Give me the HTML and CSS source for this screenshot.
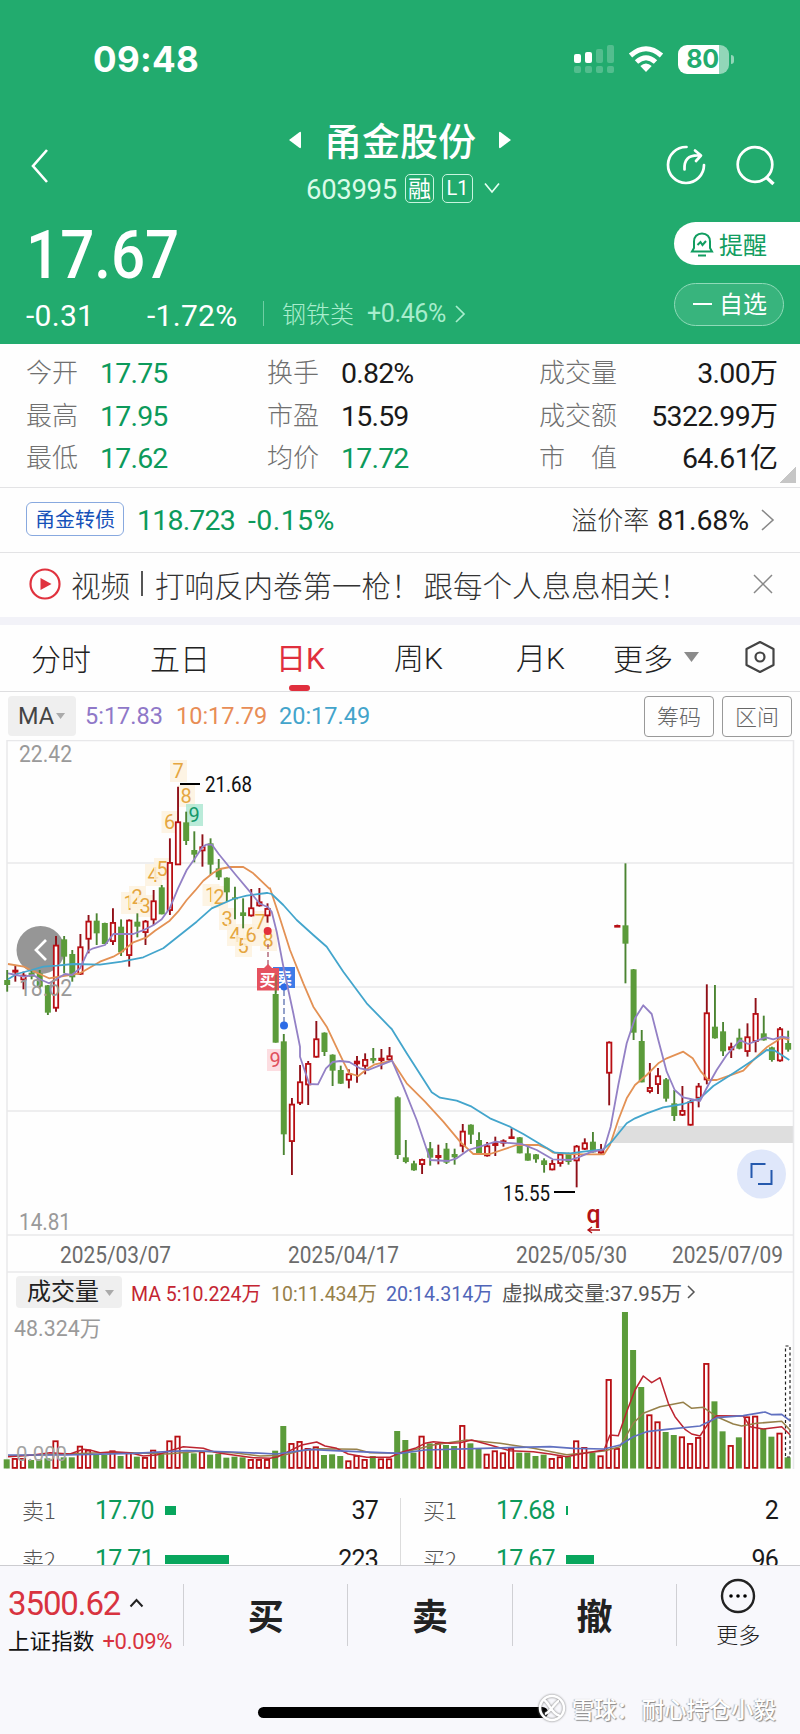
FILE: index.html
```html
<!DOCTYPE html>
<html lang="zh-CN">
<head>
<meta charset="utf-8">
<title>甬金股份 603995</title>
<link rel="stylesheet" href="styles.css">
</head>
<body>
<div class="app">
  <header class="header">
    <div class="status">
      <span class="clock">09:48</span>
      <svg class="signal" width="42" height="30" viewBox="0 0 42 30" fill="#fff">
        <rect x="1" y="10" width="7" height="9" rx="2"/><rect x="12" y="8" width="7" height="11" rx="2"/>
        <g opacity=".22"><rect x="23" y="5" width="7" height="14" rx="2"/><rect x="34" y="1" width="7" height="18" rx="2"/><rect x="1" y="22" width="7" height="7" rx="2"/><rect x="12" y="22" width="7" height="7" rx="2"/><rect x="23" y="22" width="7" height="7" rx="2"/><rect x="34" y="22" width="7" height="7" rx="2"/></g>
      </svg>
      <svg class="wifi" width="36" height="27" viewBox="0 0 36 27" fill="none" stroke="#fff" stroke-width="5"><path d="M2.500 9.500Q18-4 33.500 9.500"/><path d="M8.500 16Q18 7.500 27.500 16"/><path d="M12.300 20Q18 15 23.700 20L18 26Z" fill="#fff" stroke="none"/></svg>
      <div class="battery"><span>80</span></div><i class="battery-tip"></i>
    </div>
    <div class="titlebar">
      <svg class="back" width="20" height="36" viewBox="0 0 20 36"><path d="M17 2 3 18l14 16" fill="none" stroke="#fff" stroke-width="2.600"/></svg>
      <div class="stock">
        <div class="stock-name"><svg width="14" height="20"><path d="M13 3v14q0 2-2 .5L1 10 11 2.500q2-1.500 2 .5z" fill="#fff"/></svg><b>甬金股份</b><svg width="14" height="20"><path d="M1 3v14q0 2 2 .5L13 10 3 2.500Q1 1 1 3z" fill="#fff"/></svg></div>
        <div class="stock-code"><span>603995</span><i>融</i><i class="lv">L1</i><svg width="16" height="12" viewBox="0 0 16 12"><path d="M1 1.500 8 10l7-8.500" fill="none" stroke="#e3fff1" stroke-width="1.700"/></svg></div>
      </div>
      <div class="tools">
        <svg width="40" height="42" viewBox="0 0 40 42" fill="none" stroke="#fff" stroke-width="2.700" stroke-linecap="round"><path d="M20.500 3A18 18 0 1 0 38 21"/><path d="M18.500 25.500C18 16 22 11 33 11.500M29 6.500l6 5-5 5.500" stroke-linejoin="round"/></svg>
        <svg width="40" height="42" viewBox="0 0 40 42" fill="none" stroke="#fff" stroke-width="2.700"><circle cx="20" cy="20.500" r="17.300"/><path d="m31.500 33.500 7 6.500" stroke-width="3.500"/></svg>
      </div>
    </div>
    <div class="quote">
      <div class="price"><span>17.67</span></div>
      <div class="change"><span class="diff">-0.31</span><span class="pct">-1.72%</span><i></i><span class="sector">钢铁类</span><span class="sector-pct">+0.46%</span><svg width="12" height="20"><path d="m2 2 8 8-8 8" fill="none" stroke="#a8edcd" stroke-width="1.700"/></svg></div>
    </div>
    <div class="actions">
      <div class="remind"><svg width="24" height="26" viewBox="0 0 24 26" fill="none" stroke="#119d60" stroke-width="2"><path d="M12 2.500c-5 0-8 3.500-8 8V17l-2 3.500h20L20 17v-6.500c0-4.500-3-8-8-8zM8 24.500h8"/><path d="m7.500 14 3-3 2 3 3.500-4"/></svg>提醒</div>
      <div class="fav"><i></i>自选</div>
    </div>
  </header>

  <section class="stats">
    <span>今开</span><b class="g">17.75</b><span>换手</span><b>0.82%</b><span>成交量</span><b class="r">3.00<em>万</em></b>
    <span>最高</span><b class="g">17.95</b><span>市盈</span><b>15.59</b><span>成交额</span><b class="r">5322.99<em>万</em></b>
    <span>最低</span><b class="g">17.62</b><span>均价</span><b class="g">17.72</b><span>市　值</span><b class="r">64.61<em>亿</em></b>
    <i class="corner"></i>
  </section>

  <section class="bond">
    <span class="tag">甬金转债</span><b class="g">118.723</b><b class="g bp">-0.15%</b>
    <span class="prem">溢价率</span><b>81.68%</b><svg width="15" height="24"><path d="m2 2 11 10L2 22" fill="none" stroke="#888" stroke-width="1.600"/></svg>
  </section>

  <section class="news">
    <svg width="32" height="32" viewBox="0 0 32 32"><circle cx="16" cy="16" r="14.500" fill="none" stroke="#e0323e" stroke-width="2.200"/><path d="m11.500 10 11 6-11 6z" fill="#e0323e"/></svg>
    <span>视频</span><i></i><span>打响反内卷第一枪！</span><span class="n2">跟每个人息息相关！</span>
    <svg class="close" width="20" height="20"><path d="m1 1 18 18M19 1 1 19" stroke="#888" stroke-width="1.500"/></svg>
  </section>

  <nav class="tabs">
    <span>分时</span><span>五日</span><span class="on">日<em>K</em></span><span>周<em>K</em></span><span>月<em>K</em></span><span>更多</span><i></i>
    <svg width="32" height="34" viewBox="0 0 32 34" fill="none" stroke="#444" stroke-width="2.200"><path d="M16 2 29.500 9v16L16 32 2.500 25V9z" stroke-linejoin="round"/><circle cx="16" cy="17" r="4.500"/></svg>
  </nav>

  <section class="mabar">
    <div class="ma-btn">MA<i></i></div><span class="m5">5:17.83</span><span class="m10">10:17.79</span><span class="m20">20:17.49</span>
    <div class="btns"><span>筹码</span><span>区间</span></div>
  </section>

  <svg class="chart" id="chart" width="800" height="738" viewBox="0 740 800 738"></svg>

  <section class="book">
    <div class="side">
      <div class="row"><span>卖1</span><b class="g">17.70</b><i style="width:11px"></i><b class="q">37</b></div>
      <div class="row"><span>卖2</span><b class="g">17.71</b><i style="width:64px"></i><b class="q">223</b></div>
    </div>
    <div class="side">
      <div class="row"><span>买1</span><b class="g">17.68</b><i style="width:2px"></i><b class="q">2</b></div>
      <div class="row"><span>买2</span><b class="g">17.67</b><i style="width:28px"></i><b class="q">96</b></div>
    </div>
  </section>

  <footer class="footer">
    <div class="dock">
      <div class="index"><div class="iv">3500.62<svg width="15" height="10"><path d="m1.500 8.500 6-6.500 6 6.500" fill="none" stroke="#222" stroke-width="2"/></svg></div><div class="in">上证指数<span>+0.09%</span></div></div>
      <div class="act">买</div><div class="act">卖</div><div class="act">撤</div>
      <div class="more"><svg width="36" height="36" viewBox="0 0 36 36"><circle cx="18" cy="18" r="16" fill="none" stroke="#222" stroke-width="2.400"/><circle cx="11" cy="18" r="1.800"/><circle cx="18" cy="18" r="1.800"/><circle cx="25" cy="18" r="1.800"/></svg><span>更多</span></div>
    </div>
    <div class="home"></div>
    <div class="mark"><svg width="28" height="28" viewBox="0 0 28 28" fill="none" stroke="#fff" stroke-width="2.500"><circle cx="14" cy="14" r="12"/><path d="M6 6c5 2 7 14 16 16M21 7c-3 0-9 12-14 13" /></svg><span>雪球：</span><span>耐心持仓小毅</span></div>
  </footer>
</div>
<script src="chart.js"></script>
</body>
</html>
```

FILE: styles.css
```css
* { box-sizing: border-box; }
body { margin: 0; background: #fff; color: #1a1a1a; font-family: Roboto, "Noto Sans CJK SC", sans-serif; }
i, em { font-style: normal; }
b { font-weight: 400; }
svg { display: block; flex: none; }
.app { width: 800px; height: 1734px; overflow: hidden; background: #fefefe; }
.g { color: #0c9a5b; }

.header { position: relative; height: 344px; background: #22ab6e; color: #fff; }
.status { display: flex; align-items: center; height: 118px; padding: 0 0 0 93px; }
.clock { width: 480px; font: 700 35px/40px Inter, sans-serif; letter-spacing: .3px; }
.wifi { margin-left: 13px; }
.battery { margin-left: 14px; width: 51px; height: 29px; border-radius: 9px; background: linear-gradient(90deg, #fff 80%, #92d6b8 80%); color: #22ab6e; font: 700 25px/29px Inter, sans-serif; text-align: center; letter-spacing: -.3px; padding-right: 2px; }
.battery-tip { width: 3px; height: 9px; margin-left: 2px; border-radius: 0 4px 4px 0; background: #92d6b8; }
.titlebar { display: flex; height: 92px; padding-left: 30px; }
.back { margin-top: 30px; }
.stock { width: 440px; margin-left: 130px; }
.stock-name { display: flex; align-items: center; justify-content: center; gap: 22px; height: 44px; }
.stock-name b { margin-top: -3px; font: 500 38px/44px "Noto Sans CJK SC", sans-serif; }
.stock-code { display: flex; align-items: center; height: 52px; padding-left: 126px; color: #d9fbe9; font-size: 27.500px; letter-spacing: -.3px; }
.stock-code span { width: 99px; margin-top: 3px; }
.stock-code i { width: 29px; height: 29px; margin-right: 8px; border: 1.5px solid #c8f5df; border-radius: 5px; font: 23px/25px "Noto Sans CJK SC", sans-serif; text-align: center; letter-spacing: 0; color: #fff; }
.stock-code .lv { width: 31px; font: 20px/26px Roboto, sans-serif; margin-right: 11px; }
.tools { display: flex; gap: 29px; margin: 26px 0 0 46px; }
.quote { padding-left: 26px; }
.price { height: 88px; padding-top: 2px; font: 500 66px/88px Roboto, sans-serif; }
.price span { display: inline-block; transform: scaleX(.91); transform-origin: 0 50%; }
.change { display: flex; align-items: center; height: 34px; font-size: 30px; letter-spacing: .3px; }
.diff { width: 121px; }
.pct { width: 116px; }
.change i { width: 1px; height: 25px; margin-top: -4px; background: #6fcea3; }
.sector { margin: -4px 0 0 18px; width: 85px; font: 300 24px/30px "Noto Sans CJK SC", sans-serif; letter-spacing: 0; color: #a8edcd; }
.sector-pct { width: 87px; margin-top: -3px; font-size: 25px; letter-spacing: -.4px; color: #a8edcd; }
.change svg { margin-top: -3px; }
.actions { position: absolute; right: 0; top: 222px; width: 126px; display: flex; flex-direction: column; gap: 18px; font: 24px/42px "Noto Sans CJK SC", sans-serif; }
.remind { display: flex; align-items: center; height: 43px; padding-left: 16px; gap: 5px; border-radius: 22px 0 0 22px; background: #fff; color: #119d60; }
.fav { display: flex; align-items: center; width: 110px; height: 43px; padding: 0 0 3px 18px; gap: 7px; border: 1.5px solid #8fdab8; border-radius: 22px; background: #38b47d; }
.fav i { width: 19px; height: 2px; margin-top: 2px; background: #fff; }

.stats { position: relative; display: grid; height: 144px; padding: 8px 22px 0 26px; grid-template-columns: 74px 167px 74px 198px 91px 1fr; grid-auto-rows: 42.500px; line-height: 43px; font-size: 28.500px; border-bottom: 1.500px solid #e3e3e5; }
.stats span { font: 300 26px/38px "Noto Sans CJK SC", sans-serif; color: #707070; }
.stats b { letter-spacing: -.8px; }
.stats .r { text-align: right; letter-spacing: -.7px; }
.stats em { font: 28px/30px "Noto Sans CJK SC", sans-serif; letter-spacing: 0; }
.corner { position: absolute; right: 4px; bottom: 4px; width: 16px; height: 16px; background: linear-gradient(135deg, transparent 50%, #c6c6c6 50%); }

.bond { display: flex; align-items: center; height: 65px; padding: 0 25px 0 26px; font-size: 28.500px; letter-spacing: -.8px; border-bottom: 1.500px solid #e3e3e5; }
.tag { width: 98px; height: 34px; margin: -2px 13px 0 0; border: 1px solid #88a9df; border-radius: 6px; font: 20px/31px "Noto Sans CJK SC", sans-serif; text-align: center; letter-spacing: 0; color: #1450b8; }
.bp { margin-left: 13px; letter-spacing: .4px; }
.prem { margin: -2px 8px 0 auto; font: 300 26px/34px "Noto Sans CJK SC", sans-serif; letter-spacing: 0; color: #333; }
.prem + b { letter-spacing: -.1px; }
.bond svg { margin-left: 11px; }

.news { display: flex; align-items: center; height: 72px; padding: 0 27px 3px 29px; border-bottom: 8px solid #f2f2f8; font: 300 29.500px/40px "Noto Sans CJK SC", sans-serif; color: #333; }
.news svg:first-child { margin-right: 10px; }
.news i { width: 2px; height: 25px; margin: 0 12px 0 11px; background: #555; }
.n2 { margin-left: 3px; white-space: nowrap; }
.close { margin-left: auto; }

.tabs { display: grid; grid-template-columns: 119px 126px 118px 122px 97px 71px 60px auto; align-items: center; justify-content: start; height: 67px; padding: 0 0 2px 31px; border-bottom: 1.500px solid #dedee0; font: 30px/46px "Noto Sans CJK SC", sans-serif; color: #222; }
.tabs span { white-space: nowrap; font-weight: 300; }
.tabs em { font: 300 30px/46px Roboto, sans-serif; }
.tabs .on { position: relative; color: #e02f3d; font-weight: 400; }
.tabs .on em { font-weight: 400; }
.on::after { content: ""; position: absolute; left: 13px; top: 52px; width: 21px; height: 6px; border-radius: 4px; background: #e02f3d; }
.tabs i { width: 15px; height: 10px; background: #8b8b8b; clip-path: polygon(0 0, 100% 0, 50% 100%); }

.mabar { display: flex; align-items: center; height: 48px; padding: 0 8px; font-size: 23.500px; white-space: nowrap; }
.ma-btn { display: flex; align-items: center; width: 68px; height: 40px; padding-left: 10px; gap: 2px; border-radius: 4px; background: #efefef; color: #444; margin-right: 9px; }
.ma-btn i { width: 9px; height: 6px; background: #aaa; clip-path: polygon(0 0, 100% 0, 50% 100%); }
.m5 { width: 91px; color: #8f78c8; } .m10 { width: 103px; color: #e88d56; } .m20 { color: #43a4cb; }
.btns { display: flex; gap: 8px; margin-left: auto; font: 300 22px/36px "Noto Sans CJK SC", sans-serif; color: #666; }
.btns span { width: 70px; height: 41px; border: 1.500px solid #999; border-radius: 4px; text-align: center; }

.book { display: flex; height: 87px; overflow: hidden; padding-top: 20px; }
.side { width: 400px; padding: 0 22px; }
.side + .side { border-left: 1px solid #dcdcdc; }
.row { display: flex; align-items: center; height: 48.700px; font-size: 25px; letter-spacing: -.8px; }
.row:first-child { margin-top: -12px; }
.row span { width: 74px; margin-top: -2px; font: 300 22px/30px "Noto Sans CJK SC", sans-serif; letter-spacing: 0; color: #555; }
.row .g { width: 69px; margin-left: -1px; margin-right: 1px; }
.row i { height: 9px; background: #08a65d; }
.row .q { margin-left: auto; }

.footer { position: relative; height: 169px; border-top: 1.500px solid #ccccd0; background: #f8f8fc; }
.dock { display: flex; padding-top: 18px; height: 82px; }
.index { width: 183px; padding-left: 8px; }
.iv { display: flex; align-items: center; gap: 9px; height: 38px; font-size: 33px; letter-spacing: -1.100px; color: #d83340; }
.in { height: 38px; white-space: nowrap; font: 21.600px/36px "Noto Sans CJK SC", sans-serif; color: #111; }
.in span { margin-left: 8px; font: 22px/30px Roboto, sans-serif; letter-spacing: -.3px; color: #d83340; }
.act { width: 164.400px; height: 62px; border-left: 1px solid #d0d0d4; font: 700 36px/60px "Noto Sans CJK SC", sans-serif; text-align: center; color: #222; }
.more { width: 123px; height: 62px; border-left: 1px solid #d0d0d4; display: flex; flex-direction: column; align-items: center; font: 300 22px/32px "Noto Sans CJK SC", sans-serif; color: #222; }
.more svg { margin-top: -6px; } .more span { margin-top: 3px; }
.home { width: 290px; height: 11px; margin: 59px 0 0 258px; border-radius: 6px; background: #000; }
.mark { position: absolute; left: 538px; top: 127px; display: flex; align-items: center; font: 500 22.300px/30px "Noto Sans CJK SC", sans-serif; color: #fff; text-shadow: 1px 1px 1px #888, -1px 0 1px #bbb; white-space: nowrap; }
.mark svg { margin-right: 6px; filter: drop-shadow(0 0 1px #777); }
.mark span + span { margin-left: 3px; }
```

FILE: chart.js
```js
const svg = document.getElementById('chart');
let out = '';
const RED = '#b80f14', GREEN = '#5b9b3a';
const cx = i => 7.2 + 8.135 * i;
const line = (x1, y1, x2, y2, c, w = 1.5, extra = '') => out += `<line x1="${x1}" y1="${y1}" x2="${x2}" y2="${y2}" stroke="${c}" stroke-width="${w}" ${extra}/>`;
const label = (x, y, w, s, size, c, extra = '') => out += `<text x="${x}" y="${y}" font-size="${size}" fill="${c}" textLength="${w}" lengthAdjust="spacingAndGlyphs" ${extra}>${s}</text>`;

// frame and grid
out += '<rect x="618" y="1126" width="175" height="17" fill="#dedede"/><path d="M610 1143l10-17v17z" fill="#dedede"/>';
[740.5, 863, 987, 1111, 1235, 1272].forEach(y => line(7, y, 793, y, '#e8e8ea'));
line(7, 740, 7, 1469, '#e8e8ea'); line(793.5, 740, 793.5, 1469, '#e8e8ea');

// numbered marks behind the candles
const mark = (x, y, n, c = '#e5a640', bg = '#fdf1dd') => out += `<rect x="${x - 8}" y="${y - 11}" width="17" height="22" fill="${bg}" fill-opacity=".8"/><text x="${x}" y="${y + 7}" font-size="20" text-anchor="middle" fill="${c}">${n}</text>`;
[[129,903,1],[137,897,2],[145,906,3],[153,875,4],[162,869,5],[169.5,822,6],[178,771,7],[186,796,8],
 [210.5,895,1],[219,897,2],[227,919,3],[235,935,4],[243,946,5],[251,935,6],[260,922,7],[268,940,8]].forEach(m => mark(...m));
mark(194, 815, 9, '#15996a', '#a9e6cf');
mark(275, 1060, 9, '#e0505c', '#fbd5da');
out += '<circle cx="40.500" cy="950" r="24" fill="#969696"/>';

// candles: direction, high, low, body top, body bottom, in thirds of a pixel below the base
const groups = [
  [690, `g840,905,870,885 r828,875,840,847 r845,898,855,870 g840,868,848,860 g840,895,850,890 g885,975,886,968 r738,965,765,955 g738,850,748,800 g780,875,792,862 r732,855,770,853 r675,790,693,748 g670,765,692,730 g698,762,699,762 r655,765,697,755 g688,798,710,787 r688,830,690,797 g670,742,695,710 r690,765,693,728 r600,705,632,690 g585,673,592,673 r445,675,517,662 r290,525,395,525 g365,465,397,453 g424,517,480,494 r433,530,470,483 g445,555,460,524 g507,570,535,562 g562,635,563,607 g590,688,622,628 g625,715,667,678 r597,680,653,678 r594,650,635,648 r640,698,655,678`],
  [860, `g370,548,402,548 g522,885,544,823 r714,945,732,845 r615,735,665,730 r603,735,610,675 r483,593,536,592 g517,588,518,576 g583,678,584,632 g617,672,630,671 r628,685,641,661 r588,668,603,612 r580,643,598,619 g564,610,594,602 r567,628,594,602 r561,605,587,600 g709,897,712,885 g840,910,892,906 g902,932,910,931 r896,942,898,914 g846,917,865,893 r854,913,886,893 g849,912,866,908 g866,914,882,892 r792,877,813,859 g793,852,794,824 g817,882,840,881 r846,890,857,888 r830,888,848,857 r838,860,842,850 r805,837,830,836 g831,880,832,880`],
  [840, `g921,962,940,962 g942,968,943,958 g955,998,961,975 r960,991,970,990 r938,980,942,971 g938,974,940,966 r915,1042,918,963 r895,930,908,928 g876,938,905,937 r912,943,930,940 r604,796,606,700 r254,261,256,259 g70,430,256,311 g387,600,388,578 g570,727,603,727 r669,760,742,755 r684,762,707,734 g714,785,718,776 g750,843,790,828 r738,828,811,826 r780,857,785,856 r729,802,738,775 r433,733,518,720 g435,596,560,595 g546,648,574,634 r608,654,620,630 g566,628,593,626 r550,650,590,635 r474,637,520,605 g527,602,580,601 g620,665,622,660 r561,665,566,663 g572,635,609,629`]
];
const body = (x, t, b, dir) => dir === 'g'
  ? `<rect x="${x - 3}" y="${t}" width="6" height="${Math.max(b - t, 1)}" fill="${GREEN}"/>`
  : `<rect x="${x - 2.2}" y="${t + .6}" width="4.400" height="${Math.max(b - t - 1.2, .8)}" fill="#fff" stroke="${RED}" stroke-width="1.800"/>`;
let i = 0;
groups.forEach(([base, rows]) => rows.split(' ').forEach(r => {
  const [h, l, t, b] = r.slice(1).split(',').map(v => base + v / 3);
  line(cx(i), h, cx(i), l, r[0] === 'g' ? '#4b8432' : '#8f1018', 1.9);
  out += body(cx(i), t, b, r[0]);
  i++;
}));

// moving averages: [x0, y0, points in thirds of a pixel]
const curve = (c, parts, w = 1.8) => {
  const pts = parts.flatMap(([x0, y0, s]) => s.split(' ').map(p => { const [x, y] = p.split(','); return (x0 + x / 3).toFixed(1) + ',' + (y0 + y / 3).toFixed(1); }));
  out += `<polyline points="${pts.join(' ')}" fill="none" stroke="${c}" stroke-width="${w}" stroke-linejoin="round"/>`;
};
curve('#e39154', [
  [0, 690, '24,822 72,830 147,865 190,858 240,850 300,815 340,800 365,785 400,757 440,742 465,722 509,692 534,665 560,630 585,602 610,572 640,548 660,537 690,531 730,531 760,550 808,596'],
  [130, 740, '420,445 445,520 480,630 520,730 550,800 590,860 640,965'],
  [260, 860, '268,640 295,648 320,628 345,613 396,602 440,670 495,725 550,785 600,845 640,882 690,882 740,865'],
  [500, 840, '50,915 115,915 140,925 160,938 210,942 250,943 312,943 330,915 355,840 380,775 405,735 440,705 475,670 500,655 550,635 578,655 603,695 625,720 650,720 690,706 730,692 765,655 800,622 845,593 868,600']]);
curve('#43a5cc', [
  [0, 690, '24,868 50,852 95,840 130,830 170,827 220,822 300,824 365,815 430,802 490,775 540,735 590,695 635,655 700,627 740,617 800,609'],
  [130, 740, '413,459 425,462 460,495 500,540 550,585 590,620 640,695 710,790 780,862'],
  [260, 860, '395,507 440,580 515,697 540,713 590,722 635,740 690,775 750,800'],
  [500, 840, '35,863 70,882 130,918 165,938 210,940 250,935 310,928 335,905 380,850 405,835 440,820 490,802 550,792 600,775 640,738 700,700 760,660 800,630 825,632 868,660']]);

// buy and sell flags
line(268, 944, 268, 966, '#a85467', 1.3, 'stroke-dasharray="5 3"');
line(284, 990, 284, 1022, '#5a6fae', 1.3, 'stroke-dasharray="6 3"');
out += '<rect x="273" y="967" width="22" height="21" fill="#3e7be8"/><text x="284" y="984" font-size="16" font-weight="700" text-anchor="middle" fill="#fff">卖</text><circle cx="284" cy="987" r="3.500" fill="#2d6be6"/><path d="M257 968h7l4-4 4 4h7v22.500h-22z" fill="#e5525f"/><text x="267.500" y="985.500" font-size="16" font-weight="700" text-anchor="middle" fill="#fff">买</text><circle cx="267.700" cy="931" r="4" fill="#e3303c"/><circle cx="284" cy="1025.500" r="4" fill="#2d6be6"/>';
out += '<path d="M276 975v18" stroke="#4b8432" stroke-width="1.300" opacity=".6"/>';

curve('#9380c5', [
  [0, 690, '24,850 50,855 72,860 100,855 120,868 147,880 168,868 195,852 216,855 240,835 265,782 280,775 315,765 340,732 400,732 436,718 461,705 485,688 509,655 534,595 560,540 585,505 607,472 618,464 636,464 656,492 705,552 754,610 778,640 800,650'],
  [130, 740, '413,500 425,515 440,575 462,690 490,820 510,920'],
  [260, 860, '120,590 148,672 174,673 198,625 218,606 240,603 268,606 300,625 325,630 350,620 396,602 430,680 470,780 511,900 565,903 590,895 625,870 660,860 707,845 735,848'],
  [500, 840, '65,912 85,920 110,930 158,958 210,960 235,952 270,937 312,928 332,860 355,735 380,610 405,535 430,496 455,522 475,600 500,695 524,750 549,772 600,783 625,735 650,690 680,645 720,600 745,612 797,592 820,598 845,590 868,594']]);

out += '<path d="m46 940-10 10 10 10" fill="none" stroke="#fff" stroke-width="2.700"/>';
label(19, 762, 53, '22.42', 23, '#9a9a9a');
label(19, 996, 53, '18.62', 23, '#9a9a9a');
label(19, 1230, 52, '14.81', 23, '#9a9a9a');
line(180, 784, 200, 784, '#000', 2); label(205, 791.5, 47, '21.68', 21.5, '#111');
line(554, 1192, 575, 1192, '#000', 2); label(503, 1200.5, 47, '15.55', 21.5, '#111');
out += '<text x="586.500" y="1223" font-size="25" font-weight="500" fill="#b31217">q</text><path d="M600 1230h-12m4-3-4 3 4 3" fill="none" stroke="#b31217" stroke-width="1.300"/>';
out += '<circle cx="761.500" cy="1174" r="24.500" fill="#dfe7fa"/><path d="M751.500 1178v-14h14M758 1184h13.500v-14" fill="none" stroke="#2559ad" stroke-width="2"/>';

[['2025/03/07', 60], ['2025/04/17', 288], ['2025/05/30', 516], ['2025/07/09', 672]].forEach(([d, x]) => label(x, 1263, 111, d, 23, '#6b6b6b'));

// volume pane
out += '<rect x="16" y="1276" width="106" height="32" rx="4" fill="#efefef"/><path d="M105 1290h9l-4.500 6z" fill="#aaa"/>';
label(27, 1300, 72, '成交量', 24, '#222');
label(131, 1301, 130, 'MA 5:10.224万', 20.5, '#c42532');
label(271, 1301, 106, '10:11.434万', 20.5, '#96804a');
label(386, 1301, 107, '20:14.314万', 20.5, '#5065b8');
label(502, 1301, 180, '虚拟成交量:37.95万', 20.5, '#555');
out += '<path d="m688 1286 6 6-6 6" fill="none" stroke="#555" stroke-width="1.500"/>';
label(14, 1336, 87, '48.324万', 21.5, '#9a9a9a');

const vols = 'g688 r685 r685 g690 g688 g685 r632 g682 g682 r648 r660 g675 g675 r662 g678 r668 g680 r682 r660 g672 r632 r618 g665 g670 r665 g674 g672 g683 g680 g682 r688 r688 r688 g662 g588 r640 r634 r655 r650 g675 g673 g678 r692 r676 r688 g678 r686 r686 g603 g630 g668 r618 g640 r640 g645 g648 r586 g640 g655 r672 r662 r668 r655 g668 g668 g678 g674 r685 r680 g680 r632 r652 g668 r677 r448 r655 g246 g360 g471 r554 r575 g606 g615 r620 r640 r622 r400 g514 g604 r646 g622 r560 r558 g596 g620 r609 g682';
vols.split(' ').forEach((v, n) => out += body(cx(n) - .5, 1230 + v.slice(1) / 3, 1468.5, v[0]));
out += '<rect x="785.500" y="1346" width="4.500" height="111" fill="none" stroke="#222" stroke-width="1.200" stroke-dasharray="3 2.500"/>';
curve('#96804a', [
  [0, 1230, '24,678 200,672 300,668 400,668 500,672 600,664 700,668 780,678 850,676 900,662 960,656 1070,658 1110,668 1200,670'],
  [400, 1230, '100,645 200,630 300,640 400,655 500,674 612,663 660,650 700,580 730,550 780,530 850,517 875,535 910,532 950,560 1000,582 1025,588 1070,580 1145,574 1170,600']], 1.5);
curve('#bd2430', [
  [0, 1230, '24,680 100,675 150,668 210,672 250,658 270,660 300,668 340,665 390,668 430,678 470,675 510,662 550,650 610,655 650,668 700,675 760,683 810,685 835,680 870,662 905,645 950,636 975,648 1010,655 1045,672 1100,682 1170,682 1200,668'],
  [400, 1230, '45,655 75,640 100,635 150,640 180,638 215,630 270,645 330,662 400,665 450,672 500,680 540,672 580,665 612,660 630,615 655,617 680,545 705,480 730,438 755,458 780,443 805,520 825,560 855,598 875,612 900,618 925,580 950,557 1030,558 1050,590 1090,597 1145,590 1170,614']], 1.5);
curve('#6070c0', [
  [0, 1230, '24,675 200,675 400,670 560,662 700,666 830,672 930,658 1000,662 1200,670'],
  [400, 1230, '75,660 250,655 450,650 520,655 612,657 660,645 700,620 740,605 800,598 900,588 950,563 1030,557 1095,546 1115,554 1145,553 1170,572']], 1.7);
label(16, 1461, 51, '0.000', 21, '#a3a3a3');
svg.innerHTML = out;
```
